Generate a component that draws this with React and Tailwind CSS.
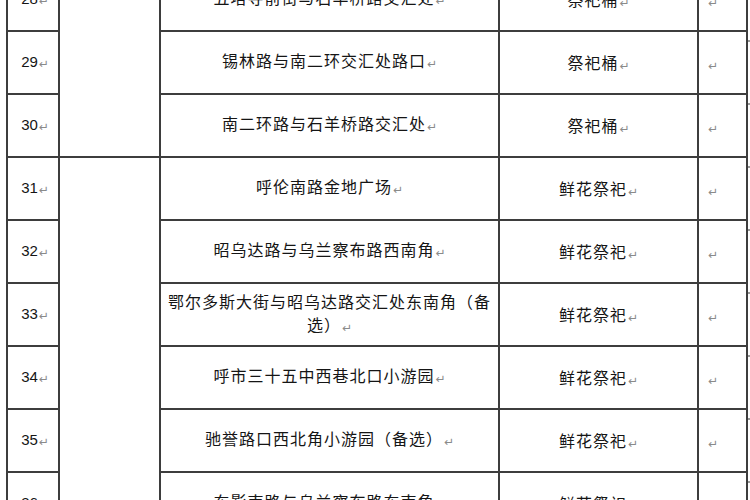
import React from "react";

const CJK = { fontFamily: '"Noto Sans CJK SC", "Noto Sans", sans-serif' };

function Mark() {
  return (
    <span className="text-[12px] text-[#8a8a8a] ml-[1px] tracking-normal align-[-1px]" style={{ fontFamily: '"DejaVu Sans", sans-serif' }}>
      ↵
    </span>
  );
}

const rows = [
  { n: "28", place: "五塔寺前街与石羊桥路交汇处", kind: "祭祀桶", group: { span: 3 } },
  { n: "29", place: "锡林路与南二环交汇处路口", kind: "祭祀桶" },
  { n: "30", place: "南二环路与石羊桥路交汇处", kind: "祭祀桶" },
  { n: "31", place: "呼伦南路金地广场", kind: "鲜花祭祀", group: { span: 6 } },
  { n: "32", place: "昭乌达路与乌兰察布路西南角", kind: "鲜花祭祀" },
  { n: "33", place: ["鄂尔多斯大街与昭乌达路交汇处东南角（备", "选）"], kind: "鲜花祭祀" },
  { n: "34", place: "呼市三十五中西巷北口小游园", kind: "鲜花祭祀" },
  { n: "35", place: "驰誉路口西北角小游园（备选）", kind: "鲜花祭祀" },
  { n: "36", place: "东影南路与乌兰察布路东南角", kind: "鲜花祭祀" },
];

const cell = "border-2 border-[#3d3d3d] p-0";

export default function App() {
  return (
    <div className="w-[750px] h-[500px] overflow-hidden bg-white">
      <div className="flex mt-[-33px] pl-[6px]">
        <table className="table-fixed border-collapse w-[740px] text-[#151515]">
          <colgroup>
            <col className="w-[52px]" />
            <col className="w-[101px]" />
            <col className="w-[339px]" />
            <col className="w-[199px]" />
            <col className="w-[49px]" />
          </colgroup>
          <tbody>
            {rows.map((r) => (
              <tr key={r.n} className="h-[63px]">
                <td className={`${cell} text-center text-[15px]`} style={{ fontFamily: '"Liberation Sans", Arial, sans-serif' }}>
                  <span className="pl-[4px]">{r.n}</span>
                  <Mark />
                </td>
                {r.group && <td className={cell} rowSpan={r.group.span}></td>}
                <td className={`${cell} text-center text-[16px] tracking-[1px] leading-[23px]`} style={CJK}>
                  {Array.isArray(r.place) ? (
                    <>
                      {r.place[0]}
                      <br />
                      {r.place[1]}
                      <Mark />
                    </>
                  ) : (
                    <>
                      {r.place}
                      <Mark />
                    </>
                  )}
                </td>
                <td className={`${cell} text-center text-[16px] tracking-[1px]`} style={CJK}>
                  {r.kind}
                  <Mark />
                </td>
                <td className={`${cell} pl-[8px] text-left`}>
                  <Mark />
                </td>
              </tr>
            ))}
          </tbody>
        </table>
        <div className="flex flex-col">
          {rows.map((r) => (
            <div key={r.n} className="h-[63px] w-[4px] pt-[10px]">
              <div className="h-[2px] w-[3px] bg-[#9a9a9a]"></div>
            </div>
          ))}
        </div>
      </div>
    </div>
  );
}
